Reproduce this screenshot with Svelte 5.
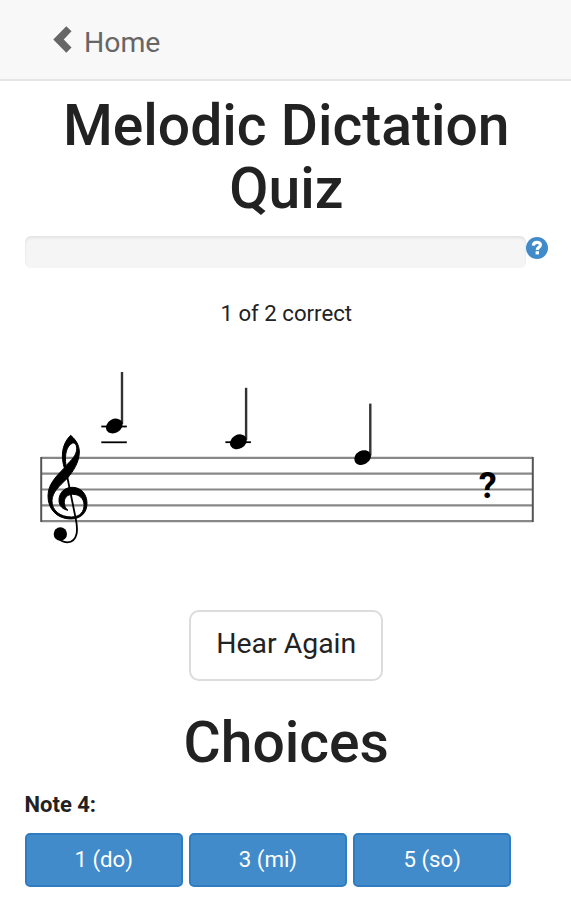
<script lang="ts">
  interface Note {
    x: number;
    y: number;
    ledgers: number[];
  }

  const staffLines = [457.8, 473.6, 489.5, 505.4, 521.2];

  const notes: Note[] = [
    { x: 114.3, y: 426, ledgers: [426.5, 442.3] },
    { x: 238.4, y: 441.8, ledgers: [442.2] },
    { x: 362.6, y: 457.6, ledgers: [] },
  ];

  const choices = ["1 (do)", "3 (mi)", "5 (so)"];

  let correct = $state(1);
  let total = $state(2);
  let noteNumber = $state(4);
</script>

<nav class="navbar">
  <a class="home" href="#home">
    <svg class="chevron" viewBox="0 0 20 28" aria-hidden="true">
      <path d="M14 0L19.5 5.2L11.3 14L19.5 22.5L14 28L0.3 14Z" />
    </svg>
    <span>Home</span>
  </a>
</nav>

<main class="container">
  <h1 class="title">Melodic Dictation Quiz</h1>

  <div class="progress-row">
    <div class="progress"></div>
    <svg class="help" viewBox="0 0 22 22" aria-label="Help">
      <circle cx="11" cy="11" r="11" />
      <path class="help-hook" d="M7.3 8.6C7.5 4.2 14.8 4.5 14.4 8.2C14.1 10.5 11.3 10.2 11.3 13" />
      <path class="help-dot" d="M9.6 14.2H13V17.4H9.6Z" />
    </svg>
  </div>

  <p class="score">{correct} of {total} correct</p>

  <svg class="staff" viewBox="26 360 521 200">
    {#each staffLines as y}
      <line class="staff-line" x1="41" x2="533" y1={y} y2={y} />
    {/each}
    <line class="bar-line" x1="41.2" x2="41.2" y1="457" y2="522" />
    <line class="bar-line" x1="532.8" x2="532.8" y1="457" y2="522" />

    <!-- treble clef -->
    <g class="clef" transform="translate(38 425) scale(0.3333)">
      <path
        class="clef-body"
        fill-rule="evenodd"
        d="M98 31C118 48 125 66 124 85C122 112 108 136 88 160C62 185 43 202 42 227C41 256 66 276 100 276C128 276 139 258 138 238C137 220 124 208 104 208C87 208 78 220 79 233C80 245 83 250 90 256C74 253 63 243 63 226C63 203 80 187 103 187C130 187 147 208 147 235C147 264 128 282 98 282C57 282 30 252 30 214C30 180 50 158 79 129C70 100 68 60 98 31ZM104 54C86 62 79 87 84 122C101 104 117 90 116 70C116 59 111 53 104 54Z"
      />
      <path class="clef-stem" d="M81 122L113 280C120 312 121 350 88 352C76 352 66 347 60 337" />
      <circle cx="67" cy="327" r="20" />
    </g>

    {#each notes as note}
      {#each note.ledgers as y}
        <line class="ledger" x1={note.x - 13} x2={note.x + 12.5} y1={y} y2={y} />
      {/each}
      <line class="note-stem" x1={note.x + 7.7} x2={note.x + 7.7} y1={note.y - 54} y2={note.y - 2} />
      <ellipse
        cx={note.x}
        cy={note.y}
        rx="8.8"
        ry="6.9"
        transform="rotate(-30 {note.x} {note.y})"
      />
    {/each}

    <text class="unknown" x="487.8" y="498">?</text>
  </svg>

  <button class="hear-again">Hear Again</button>

  <h1 class="choices-title">Choices</h1>

  <p class="note-label">Note {noteNumber}:</p>
  <div class="choices">
    {#each choices as choice}
      <button class="choice">{choice}</button>
    {/each}
  </div>
</main>

<style>
  :global(body) {
    background: #fff;
    color: #222;
    font-family: Roboto, sans-serif;
    font-size: 22.2px;
  }

  .navbar {
    box-sizing: border-box;
    height: 81px;
    padding-left: 53px;
    background: #f8f8f8;
    border-bottom: 2px solid #e5e5e5;
  }

  .home {
    display: inline-flex;
    align-items: flex-start;
    gap: 12px;
    color: #666;
    font-size: 28.4px;
    line-height: 34px;
    text-decoration: none;
    padding-top: 26px;
  }

  .chevron {
    width: 19px;
    height: 27px;
    fill: #666;
  }

  .container {
    display: flex;
    flex-direction: column;
    align-items: center;
    padding: 0 23px 0 24.5px;
  }

  h1 {
    margin: 0;
    font-size: 57px;
    font-weight: 500;
    line-height: 62.5px;
    text-align: center;
  }

  .title {
    margin-top: 14px;
  }

  .progress-row {
    display: flex;
    align-self: stretch;
    margin-top: 16px;
  }

  .progress {
    width: 501.5px;
    height: 31.5px;
    background: #f5f5f5;
    border-radius: 6px;
    box-shadow: inset 0 2px 3px rgba(0, 0, 0, 0.08);
  }

  .help {
    flex-shrink: 0;
    width: 22px;
    height: 22px;
    margin-top: 1px;
    fill: #428bca;
  }

  .help-hook {
    fill: none;
    stroke: #fff;
    stroke-width: 3.2;
  }

  .help-dot {
    fill: #fff;
  }

  .score {
    margin: 32.5px 0 0;
    line-height: 26px;
  }

  .staff {
    width: 521px;
    height: 200px;
    margin-top: 34px;
  }

  .staff-line {
    stroke: #888;
    stroke-width: 2.2;
  }

  .bar-line {
    stroke: #555;
    stroke-width: 2;
  }

  .ledger {
    stroke: #000;
    stroke-width: 1.8;
  }

  .note-stem {
    stroke: #333;
    stroke-width: 2.4;
  }

  .clef-body {
    stroke: #000;
    stroke-width: 3;
  }

  .clef-stem {
    fill: none;
    stroke: #000;
    stroke-width: 5.5;
  }

  .unknown {
    font-size: 36px;
    font-weight: 700;
    text-anchor: middle;
  }

  button {
    font-family: inherit;
    cursor: pointer;
  }

  .hear-again {
    width: 194px;
    height: 71px;
    margin-top: 49.5px;
    padding: 0 0 3px;
    background: #fff;
    border: 2px solid #dcdcdc;
    border-radius: 10px;
    color: #222;
    font-size: 28.4px;
  }

  .choices-title {
    margin-top: 31px;
  }

  .note-label {
    align-self: flex-start;
    margin: 16.5px 0 0;
    font-size: 22px;
    font-weight: 700;
    line-height: 28px;
  }

  .choices {
    display: flex;
    align-self: stretch;
    gap: 6px;
    margin-top: 14px;
  }

  .choice {
    width: 158.3px;
    height: 54px;
    padding: 0 0 2px;
    background: #428bca;
    border: 2px solid #2f7dc0;
    border-radius: 5px;
    color: #fff;
    font-size: 22.2px;
  }
</style>
